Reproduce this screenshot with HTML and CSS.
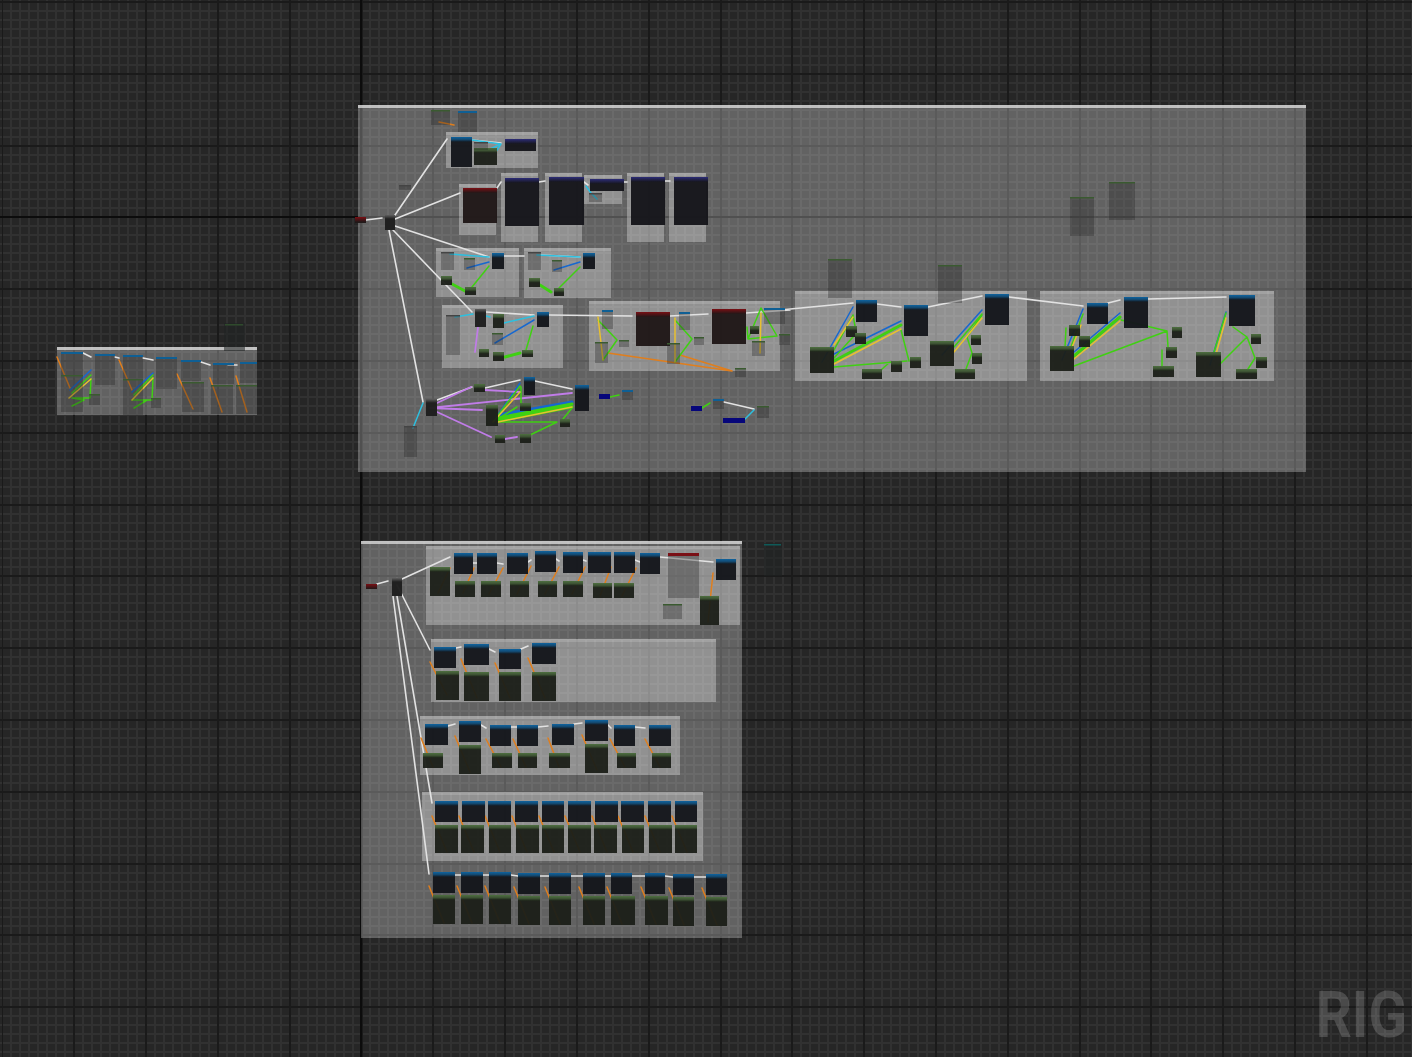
FILE: index.html
```html
<!DOCTYPE html>
<html lang="en">
<head>
<meta charset="utf-8">
<title>Rig graph</title>
<link rel="stylesheet" href="styles.css">
</head>
<body>
<main class="canvas">
<svg class="graph" width="1412" height="1057" viewBox="0 0 1412 1057">
<defs>
<linearGradient id="hb" x1="0" y1="0" x2="0" y2="1"><stop offset="0" stop-color="#0f64a0"/><stop offset=".5" stop-color="#134a72"/><stop offset="1" stop-color="#15171c"/></linearGradient>
<linearGradient id="hg" x1="0" y1="0" x2="0" y2="1"><stop offset="0" stop-color="#4e7040"/><stop offset=".5" stop-color="#3e5434"/><stop offset="1" stop-color="#1b1f18"/></linearGradient>
<linearGradient id="hp" x1="0" y1="0" x2="0" y2="1"><stop offset="0" stop-color="#2d2d78"/><stop offset="1" stop-color="#16161b"/></linearGradient>
<linearGradient id="hr" x1="0" y1="0" x2="0" y2="1"><stop offset="0" stop-color="#7a0f14"/><stop offset="1" stop-color="#201818"/></linearGradient>
<linearGradient id="hn" x1="0" y1="0" x2="0" y2="1"><stop offset="0" stop-color="#5e5e5e"/><stop offset="1" stop-color="#1e1e1e"/></linearGradient>
<pattern id="cmt" width="1" height="1"><rect width="1500" height="1000" fill="#fff" fill-opacity=".3"/><rect width="1500" height="3" fill="#fff" fill-opacity=".14"/></pattern>
<pattern id="main" width="1" height="1"><rect width="1500" height="1000" fill="#fff" fill-opacity=".28"/><rect width="1500" height="3" fill="#fff" fill-opacity=".6"/></pattern>
<pattern id="blue" width="1" height="1"><rect width="400" height="300" fill="#15171c" fill-opacity=".97"/><rect width="400" height="5" fill="url(#hb)"/></pattern>
<pattern id="green" width="1" height="1"><rect width="400" height="300" fill="#1b1f18" fill-opacity=".95"/><rect width="400" height="5" fill="url(#hg)"/></pattern>
<pattern id="purple" width="1" height="1"><rect width="400" height="300" fill="#16161b" fill-opacity=".97"/><rect width="400" height="5" fill="url(#hp)"/></pattern>
<pattern id="red" width="1" height="1"><rect width="400" height="300" fill="#201818" fill-opacity=".97"/><rect width="400" height="5" fill="url(#hr)"/></pattern>
<pattern id="hub" width="1" height="1"><rect width="400" height="300" fill="#1e1e1e" fill-opacity=".97"/><rect width="400" height="4" fill="url(#hn)"/></pattern>
<pattern id="gg" width="1" height="1"><rect width="400" height="300" fill="#222" fill-opacity=".32"/><rect width="400" height="1.5" fill="#3a5a30"/></pattern>
<pattern id="gbh" width="1" height="1"><rect width="400" height="300" fill="#222" fill-opacity=".32"/><rect width="400" height="2" fill="#0f5f94"/></pattern>
<pattern id="grh" width="1" height="1"><rect width="400" height="300" fill="#222" fill-opacity=".32"/><rect width="400" height="3" fill="#7a1016"/></pattern>
<pattern id="gn" width="1" height="1"><rect width="400" height="300" fill="#222" fill-opacity=".32"/><rect width="400" height="1.5" fill="#444"/></pattern>
</defs>

<g fill="url(#main)">
<rect x="358" y="105" width="948" height="367"/>
<rect x="361" y="541" width="381" height="397"/>
<rect x="57" y="347" width="200" height="68"/>
</g>

<g fill="url(#cmt)">
<rect x="446" y="132" width="92" height="36"/>
<rect x="459" y="184" width="37" height="51"/>
<rect x="501" y="173" width="37" height="69"/>
<rect x="545" y="173" width="37" height="69"/>
<rect x="584" y="175" width="38" height="29"/>
<rect x="627" y="173" width="37" height="69"/>
<rect x="669" y="173" width="37" height="69"/>
<rect x="436" y="248" width="83" height="49"/>
<rect x="524" y="248" width="87" height="50"/>
<rect x="442" y="305" width="121" height="63"/>
<rect x="589" y="301" width="191" height="70"/>
<rect x="795" y="291" width="232" height="90"/>
<rect x="1040" y="291" width="234" height="90"/>
<rect x="426" y="546" width="314" height="79"/>
<rect x="431" y="639" width="285" height="63"/>
<rect x="420" y="716" width="260" height="59"/>
<rect x="422" y="792" width="281" height="69"/>
</g>

<path class="wire white" d="M366 220L382 218M395 215L447 139M395 219L460 193M395 226L489 257M393 230L472 312M389 230L423 402M472 140L501 143M497 188L501 182M539 182L545 181M584 182L588 185M624 182L627 182M665 181L670 181M504 256L524 256M541 255L580 257M486 312L534 315M549 315L632 316M670 316L708 314M746 313L790 310M437 400L472 387M485 388L520 380M535 381L572 389M724 402L754 409M780 310L853 303M877 304L901 307M928 307L982 296M1009 297L1083 306M1108 303L1120 300M1148 299L1226 297M83 353L91 357M115 357L119 358M143 358L153 360M201 362L210 365M228 365L237 365M377 584L388 581M402 579L450 557M397 585L430 650M397 596L432 803M393 596L429 874M473 563L477 563M497 563L503 564M528 562L531 560M556 559L559 561M583 560L586 561M635 560L640 562M660 557L713 562M456 648L461 647M489 649L495 652M521 649L528 646M448 726L455 724M481 725L486 728M511 727L517 727M538 727L548 726M574 724L582 723M608 725L611 728M635 727L645 728M455 875L461 875M483 875L489 875M511 875L518 876M540 876L549 876M571 876L583 876M605 876L611 876M632 876L645 876M665 876L673 877M694 877L706 877"/>
<path class="wire cyan" d="M472 140L501 144M488 150L501 144M497 150L501 144M450 254L489 257M537 255L580 257M455 317L473 314M504 323L534 316M486 316L490 317M586 186L591 193L597 199M423 403L413 428M745 419L754 410"/>
<path class="wire orange" d="M439 122L454 125M608 353L732 371M680 355L732 371M57 357L70 388M119 360L132 390M177 374L193 409M210 378L222 412M236 376L247 412M450 568L438 593M474 568L463 593M503 568L489 594M531 566L517 594M559 567L545 594M585 567L572 594M611 567L600 596M636 568L622 596M713 573L708 622M430 662L447 695M461 659L477 698M495 663L510 698M528 658L545 698M421 738L433 767M455 736L470 772M486 739L501 767M513 739L526 767M548 738L559 767M582 735L597 770M610 739L625 767M645 739L660 767M432 816L447 852M459 816L474 852M485 816L500 852M512 816L527 852M539 816L554 852M565 816L580 852M592 816L607 852M618 816L633 852M645 816L660 852M672 816L687 852M429 886L444 923M457 886L472 923M485 886L500 923M514 887L529 924M545 887L560 924M579 887L594 924M607 887L622 924M641 887L656 924M669 888L684 925M702 888L717 925"/>
<path class="wire blue" d="M467 268L489 262M554 270L580 262M495 343L534 320M493 422L520 383M822 362L853 307M834 354L901 321M942 355L982 310M1062 360L1083 309M1074 352L1120 313M1210 365L1226 312M70 390L91 370M132 392L153 373"/>
<path class="wire blue thick" d="M498 415L572 402"/>
<path class="wire purple" d="M437 403L471 387M485 390L520 392M430 408L572 393M430 408L482 410M437 412L491 437M505 439L517 437M475 352L478 327"/>
<path class="wire green" d="M472 287L489 266M559 288L580 267M526 350L533 326M598 320L617 340L603 360M675 320L692 339L675 362M747 327L748 339L761 308L777 336L748 339M493 422L520 386M493 422L517 407M498 422L557 422L530 435M521 387L521 403M572 408L563 419M610 397L619 395M702 408L710 403M834 350L853 315M834 358L853 337M853 315L855 326M834 367L907 361M881 370L890 362M901 330L909 361M954 347L982 314M982 315L967 337L972 353L966 369M1066 328L1065 347M1071 347L1083 314M1074 366L1167 331M1121 320L1167 331M1167 331L1168 347M1162 350L1162 367M1214 352L1226 313M1219 365L1247 337M1233 327L1247 337M1247 337L1255 358L1248 369M72 393L91 375M91 379L90 398L72 398L84 400L72 406M134 395L153 375M153 378L152 400L132 400L147 400L134 408"/>
<path class="wire green thick" d="M452 284L465 291M540 285L551 292M505 357L520 353M498 418L572 404M498 421L572 407M834 361L901 325M1074 356L1120 317"/>
<path class="wire yellow" d="M598 317L603 360M675 318L675 362M761 313L760 353M493 422L520 392M498 422L572 407M834 345L853 317M834 364L901 329M954 352L982 318M1071 350L1081 325M1074 359L1120 321M1216 354L1226 318M69 398L91 379M132 400L153 378"/>

<g fill="url(#hub)">
<rect x="385" y="215" width="10" height="15"/>
<rect x="475" y="309" width="11" height="18"/>
<rect x="426" y="399" width="11" height="17"/>
<rect x="392" y="578" width="10" height="18"/>
</g>
<g fill="url(#red)">
<rect x="355" y="217" width="11" height="6"/>
<rect x="463" y="188" width="34" height="35"/>
<rect x="636" y="312" width="34" height="34"/>
<rect x="712" y="309" width="34" height="35"/>
<rect x="366" y="584" width="11" height="5"/>
</g>
<g fill="url(#purple)">
<rect x="505" y="139" width="31" height="12"/>
<rect x="505" y="178" width="34" height="48"/>
<rect x="549" y="177" width="35" height="48"/>
<rect x="590" y="179" width="34" height="12"/>
<rect x="631" y="177" width="34" height="48"/>
<rect x="674" y="177" width="34" height="48"/>
</g>
<g class="deep">
<rect x="599" y="394" width="11" height="5"/>
<rect x="691" y="406" width="11" height="5"/>
<rect x="723" y="418" width="22" height="5"/>
</g>
<g fill="url(#blue)">
<rect x="451" y="137" width="21" height="30"/>
<rect x="492" y="253" width="12" height="16"/>
<rect x="583" y="253" width="12" height="16"/>
<rect x="537" y="312" width="12" height="15"/>
<rect x="524" y="377" width="11" height="18"/>
<rect x="575" y="385" width="14" height="26"/>
<rect x="856" y="300" width="21" height="22"/>
<rect x="904" y="305" width="24" height="31"/>
<rect x="985" y="294" width="24" height="31"/>
<rect x="1087" y="303" width="21" height="21"/>
<rect x="1124" y="297" width="24" height="31"/>
<rect x="1229" y="295" width="26" height="31"/>
<rect x="454" y="553" width="19" height="21"/>
<rect x="477" y="553" width="20" height="21"/>
<rect x="507" y="553" width="21" height="21"/>
<rect x="535" y="551" width="21" height="21"/>
<rect x="563" y="552" width="20" height="21"/>
<rect x="588" y="552" width="23" height="21"/>
<rect x="614" y="552" width="21" height="21"/>
<rect x="640" y="553" width="20" height="21"/>
<rect x="716" y="559" width="20" height="21"/>
<rect x="434" y="647" width="22" height="21"/>
<rect x="464" y="644" width="25" height="21"/>
<rect x="499" y="649" width="22" height="20"/>
<rect x="532" y="643" width="24" height="21"/>
<rect x="425" y="724" width="23" height="21"/>
<rect x="459" y="721" width="22" height="21"/>
<rect x="490" y="725" width="21" height="21"/>
<rect x="517" y="725" width="21" height="21"/>
<rect x="552" y="724" width="22" height="21"/>
<rect x="585" y="720" width="23" height="21"/>
<rect x="614" y="725" width="21" height="21"/>
<rect x="649" y="725" width="22" height="21"/>
<rect x="435" y="801" width="23" height="21"/>
<rect x="462" y="801" width="23" height="21"/>
<rect x="488" y="801" width="23" height="21"/>
<rect x="515" y="801" width="23" height="21"/>
<rect x="542" y="801" width="22" height="21"/>
<rect x="568" y="801" width="23" height="21"/>
<rect x="595" y="801" width="23" height="21"/>
<rect x="621" y="801" width="23" height="21"/>
<rect x="648" y="801" width="23" height="21"/>
<rect x="675" y="801" width="22" height="21"/>
<rect x="433" y="872" width="22" height="21"/>
<rect x="461" y="872" width="22" height="21"/>
<rect x="489" y="872" width="22" height="21"/>
<rect x="518" y="873" width="22" height="21"/>
<rect x="549" y="873" width="22" height="21"/>
<rect x="583" y="873" width="22" height="21"/>
<rect x="611" y="873" width="21" height="21"/>
<rect x="645" y="873" width="20" height="21"/>
<rect x="673" y="874" width="21" height="21"/>
<rect x="706" y="874" width="21" height="21"/>
</g>
<g fill="url(#green)">
<rect x="474" y="148" width="23" height="17"/>
<rect x="441" y="276" width="11" height="9"/>
<rect x="465" y="287" width="11" height="8"/>
<rect x="529" y="278" width="11" height="9"/>
<rect x="554" y="288" width="10" height="8"/>
<rect x="493" y="314" width="11" height="14"/>
<rect x="479" y="349" width="10" height="8"/>
<rect x="493" y="352" width="11" height="9"/>
<rect x="522" y="350" width="11" height="7"/>
<rect x="750" y="326" width="9" height="8"/>
<rect x="474" y="384" width="11" height="8"/>
<rect x="486" y="405" width="12" height="21"/>
<rect x="520" y="403" width="11" height="8"/>
<rect x="560" y="419" width="10" height="8"/>
<rect x="495" y="435" width="10" height="8"/>
<rect x="520" y="434" width="11" height="9"/>
<rect x="810" y="347" width="24" height="26"/>
<rect x="846" y="326" width="11" height="11"/>
<rect x="855" y="333" width="11" height="11"/>
<rect x="930" y="341" width="24" height="25"/>
<rect x="862" y="369" width="20" height="10"/>
<rect x="891" y="361" width="11" height="11"/>
<rect x="910" y="357" width="11" height="11"/>
<rect x="971" y="335" width="10" height="10"/>
<rect x="972" y="353" width="10" height="11"/>
<rect x="955" y="369" width="20" height="10"/>
<rect x="1050" y="346" width="24" height="25"/>
<rect x="1069" y="325" width="11" height="11"/>
<rect x="1079" y="336" width="11" height="11"/>
<rect x="1172" y="327" width="10" height="11"/>
<rect x="1166" y="347" width="11" height="11"/>
<rect x="1153" y="366" width="21" height="11"/>
<rect x="1196" y="352" width="25" height="25"/>
<rect x="1251" y="334" width="10" height="10"/>
<rect x="1256" y="357" width="11" height="11"/>
<rect x="1236" y="369" width="21" height="10"/>
<rect x="430" y="567" width="20" height="29"/>
<rect x="455" y="581" width="20" height="16"/>
<rect x="481" y="581" width="20" height="16"/>
<rect x="510" y="581" width="19" height="16"/>
<rect x="538" y="581" width="19" height="16"/>
<rect x="563" y="581" width="20" height="16"/>
<rect x="593" y="583" width="19" height="15"/>
<rect x="614" y="583" width="20" height="15"/>
<rect x="700" y="596" width="19" height="29"/>
<rect x="436" y="671" width="23" height="29"/>
<rect x="464" y="672" width="25" height="29"/>
<rect x="499" y="672" width="22" height="29"/>
<rect x="532" y="672" width="24" height="29"/>
<rect x="423" y="753" width="20" height="15"/>
<rect x="459" y="745" width="22" height="29"/>
<rect x="492" y="753" width="20" height="15"/>
<rect x="518" y="753" width="19" height="15"/>
<rect x="549" y="753" width="21" height="15"/>
<rect x="585" y="744" width="23" height="29"/>
<rect x="617" y="753" width="19" height="15"/>
<rect x="652" y="753" width="19" height="15"/>
<rect x="435" y="825" width="23" height="28"/>
<rect x="461" y="825" width="23" height="28"/>
<rect x="489" y="825" width="22" height="28"/>
<rect x="516" y="825" width="23" height="28"/>
<rect x="542" y="825" width="22" height="28"/>
<rect x="568" y="825" width="23" height="28"/>
<rect x="594" y="825" width="23" height="28"/>
<rect x="622" y="825" width="22" height="28"/>
<rect x="649" y="825" width="23" height="28"/>
<rect x="675" y="825" width="22" height="28"/>
<rect x="433" y="895" width="22" height="29"/>
<rect x="461" y="895" width="22" height="29"/>
<rect x="489" y="895" width="22" height="29"/>
<rect x="518" y="896" width="22" height="29"/>
<rect x="549" y="896" width="22" height="29"/>
<rect x="583" y="896" width="22" height="29"/>
<rect x="611" y="896" width="24" height="29"/>
<rect x="645" y="896" width="23" height="29"/>
<rect x="673" y="897" width="21" height="29"/>
<rect x="706" y="897" width="21" height="29"/>
</g>
<g fill="url(#gbh)">
<rect x="458" y="111" width="19" height="21"/>
<rect x="602" y="310" width="11" height="19"/>
<rect x="679" y="312" width="11" height="18"/>
<rect x="764" y="308" width="21" height="16"/>
<rect x="622" y="390" width="11" height="10"/>
<rect x="713" y="399" width="11" height="10"/>
<rect x="61" y="352" width="22" height="23"/>
<rect x="95" y="354" width="20" height="31"/>
<rect x="123" y="355" width="20" height="24"/>
<rect x="156" y="357" width="21" height="32"/>
<rect x="181" y="360" width="20" height="21"/>
<rect x="213" y="363" width="21" height="21"/>
<rect x="240" y="362" width="17" height="21"/>
</g>
<g fill="url(#gg)">
<rect x="431" y="110" width="19" height="15"/>
<rect x="464" y="258" width="11" height="12"/>
<rect x="552" y="260" width="10" height="12"/>
<rect x="595" y="342" width="13" height="21"/>
<rect x="667" y="343" width="13" height="21"/>
<rect x="752" y="341" width="13" height="15"/>
<rect x="619" y="340" width="10" height="7"/>
<rect x="694" y="337" width="10" height="8"/>
<rect x="779" y="334" width="11" height="11"/>
<rect x="735" y="368" width="11" height="9"/>
<rect x="492" y="333" width="11" height="12"/>
<rect x="757" y="406" width="12" height="12"/>
<rect x="828" y="259" width="24" height="39"/>
<rect x="938" y="265" width="24" height="38"/>
<rect x="1070" y="197" width="24" height="39"/>
<rect x="1109" y="182" width="26" height="38"/>
<rect x="61" y="375" width="22" height="37"/>
<rect x="123" y="379" width="20" height="36"/>
<rect x="182" y="382" width="22" height="30"/>
<rect x="211" y="385" width="22" height="29"/>
<rect x="236" y="385" width="21" height="29"/>
<rect x="89" y="394" width="11" height="11"/>
<rect x="151" y="398" width="10" height="10"/>
<rect x="663" y="604" width="19" height="15"/>
</g>
<g fill="url(#gn)">
<rect x="399" y="185" width="12" height="5"/>
<rect x="474" y="142" width="14" height="8"/>
<rect x="589" y="193" width="13" height="9"/>
<rect x="441" y="252" width="13" height="18"/>
<rect x="528" y="252" width="13" height="18"/>
<rect x="446" y="315" width="14" height="40"/>
<rect x="404" y="426" width="13" height="31"/>
</g>
<g fill="url(#grh)">
<rect x="668" y="553" width="31" height="45"/>
</g>
<rect class="dim" x="224" y="323" width="21" height="28"/>
<rect class="dimhead" x="225" y="324" width="18" height="1.5"/>
<rect class="dim" x="764" y="543" width="18" height="33"/>
<rect class="tealhead" x="764" y="544" width="17" height="1.5"/>
</svg>
<div class="watermark">RIG</div>
</main>
</body>
</html>
```
FILE: styles.css
```css
html, body {
  margin: 0;
  padding: 0;
  background: #262626;
}
.canvas {
  position: relative;
  width: 1412px;
  height: 1057px;
  overflow: hidden;
  background-color: #262626;
  background-image:
    linear-gradient(#0c0c0c, #0c0c0c),
    linear-gradient(#0c0c0c, #0c0c0c),
    repeating-linear-gradient(90deg, transparent 0 1.5px, #1a1a1a 1.5px 3.5px, transparent 3.5px 71.8px),
    repeating-linear-gradient(180deg, transparent 0 1px, #1a1a1a 1px 3px, transparent 3px 71.8px),
    repeating-linear-gradient(90deg, transparent 0 1.5px, #313131 1.5px 3.5px, transparent 3.5px 8.975px),
    repeating-linear-gradient(180deg, transparent 0 1px, #313131 1px 3px, transparent 3px 8.975px);
  background-size: 2px 100%, 100% 2px, auto, auto, auto, auto;
  background-position: 360px 0, 0 216px, 0 0, 0 0, 0 0, 0 0;
  background-repeat: no-repeat;
}
.graph {
  display: block;
  position: absolute;
  left: 0;
  top: 0;
}
.wire {
  fill: none;
  stroke-width: 1.5;
  stroke-linecap: round;
  stroke-linejoin: round;
}
.white { stroke: #e2e2e2; stroke-width: 1.6; }
.cyan { stroke: #2cc0e0; }
.orange { stroke: #e07e1c; }
.blue { stroke: #1668d0; }
.purple { stroke: #c07ce8; stroke-width: 1.8; }
.green { stroke: #3fd012; }
.yellow { stroke: #e8c030; }
.wire.thick { stroke-width: 3; }
.deep { fill: #06067a; }
.dim { fill: #1f2222; fill-opacity: .55; }
.dimhead { fill: #2f4a2c; }
.tealhead { fill: #0f5a58; }
.watermark {
  position: absolute;
  right: 5px;
  top: 977px;
  font-family: Roboto, "Liberation Sans", sans-serif;
  font-weight: 700;
  font-size: 65px;
  line-height: 76px;
  color: rgba(255, 255, 255, .17);
  transform: scaleX(.87);
  transform-origin: right center;
}
```
